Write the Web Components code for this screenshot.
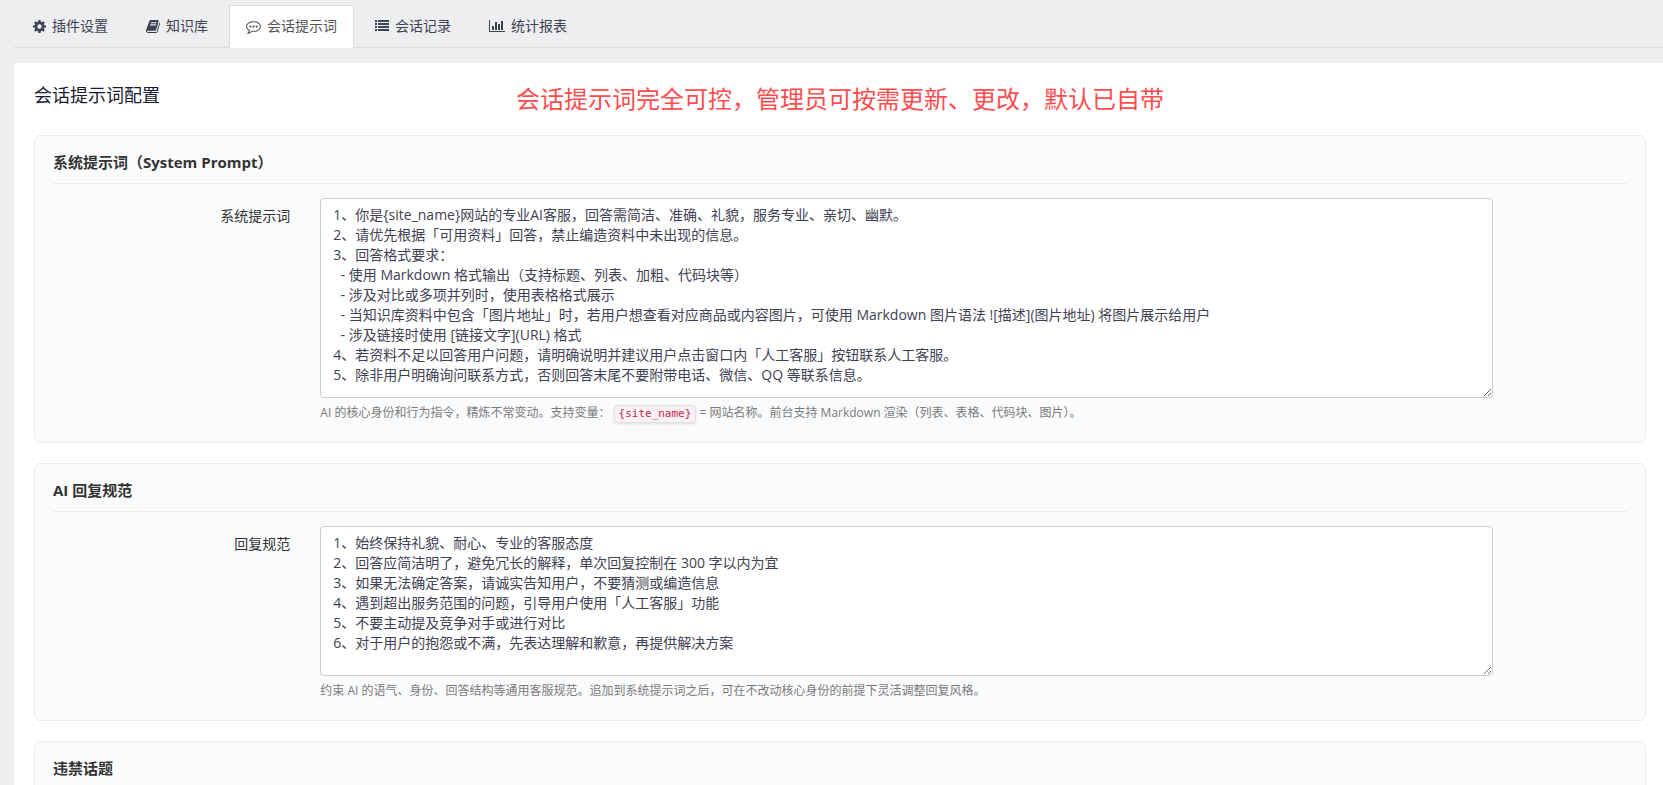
<!DOCTYPE html>
<html lang="zh-CN">
<head>
<meta charset="utf-8">
<meta name="viewport" content="width=device-width, initial-scale=1">
<title>会话提示词配置</title>
<style>
body {
	margin: 0;
	padding: 5px 0 0 14px;
	min-height: 100vh;
	box-sizing: border-box;
	overflow: hidden;
	background: #edeef0;
	color: #333;
	font: 14px/20px "Open Sans", "Noto Sans CJK SC", sans-serif;
}
</style>
</head>
<body>

<ps-tabs>
	<ps-tab icon="cog">插件设置</ps-tab>
	<ps-tab icon="book">知识库</ps-tab>
	<ps-tab icon="comment" active>会话提示词</ps-tab>
	<ps-tab icon="list">会话记录</ps-tab>
	<ps-tab icon="chart">统计报表</ps-tab>
</ps-tabs>

<ps-panel>
	<span slot="title">会话提示词配置</span>
	<span slot="note">会话提示词完全可控，管理员可按需更新、更改，默认已自带</span>

	<ps-card>
		<span slot="title">系统提示词（System Prompt）</span>
		<ps-field label="系统提示词" size="large" value="1、你是{site_name}网站的专业AI客服，回答需简洁、准确、礼貌，服务专业、亲切、幽默。
2、请优先根据「可用资料」回答，禁止编造资料中未出现的信息。
3、回答格式要求：
  - 使用 Markdown 格式输出（支持标题、列表、加粗、代码块等）
  - 涉及对比或多项并列时，使用表格格式展示
  - 当知识库资料中包含「图片地址」时，若用户想查看对应商品或内容图片，可使用 Markdown 图片语法 ![描述](图片地址) 将图片展示给用户
  - 涉及链接时使用 [链接文字](URL) 格式
4、若资料不足以回答用户问题，请明确说明并建议用户点击窗口内「人工客服」按钮联系人工客服。
5、除非用户明确询问联系方式，否则回答末尾不要附带电话、微信、QQ 等联系信息。">AI 的核心身份和行为指令，精炼不常变动。支持变量：<ps-code>{site_name}</ps-code> = 网站名称。前台支持 Markdown 渲染（列表、表格、代码块、图片）。</ps-field>
	</ps-card>

	<ps-card>
		<span slot="title">AI 回复规范</span>
		<ps-field label="回复规范" value="1、始终保持礼貌、耐心、专业的客服态度
2、回答应简洁明了，避免冗长的解释，单次回复控制在 300 字以内为宜
3、如果无法确定答案，请诚实告知用户，不要猜测或编造信息
4、遇到超出服务范围的问题，引导用户使用「人工客服」功能
5、不要主动提及竞争对手或进行对比
6、对于用户的抱怨或不满，先表达理解和歉意，再提供解决方案">约束 AI 的语气、身份、回答结构等通用客服规范。追加到系统提示词之后，可在不改动核心身份的前提下灵活调整回复风格。</ps-field>
	</ps-card>

	<ps-card>
		<span slot="title">违禁话题</span>
	</ps-card>
</ps-panel>

<script>
'use strict';

const ICONS = {
	cog: '<svg viewBox="0 0 14 14" width="13" height="13"><path fill-rule="evenodd" d="M5.9 0h2.2l.35 1.9 1.1.45L11.2 1.3l1.5 1.5-1.05 1.65.45 1.1 1.9.35v2.2l-1.9.35-.45 1.1 1.05 1.65-1.5 1.5-1.65-1.05-1.1.45L8.1 14H5.9l-.35-1.9-1.1-.45L2.8 12.7l-1.5-1.5 1.05-1.65-.45-1.1L0 8.1V5.9l1.9-.35.45-1.1L1.3 2.8l1.5-1.5 1.65 1.05 1.1-.45zM7 4.6a2.4 2.4 0 1 0 0 4.8a2.4 2.4 0 1 0 0-4.8z"/></svg>',
	book: '<svg viewBox="0 128 1664 1536" width="14" height="13"><path d="M1639 478q40 57 18 129l-275 906q-19 64-76.5 107.5t-122.5 43.5h-923q-77 0-148.5-53.5t-99.5-131.5q-24-67-2-127 0-4 3-27t4-37q1-8-3-21.5t-3-19.5q2-11 8-21t16.5-23.5 16.5-23.5q23-38 45-91.5t30-91.5q3-10 .5-30t-.5-28q3-11 17-28t17-23q21-36 42-92t25-90q1-9-2.5-32t.5-28q4-13 22-30.5t22-22.5q19-26 42.5-84.5t27.5-96.5q1-8-3-25.5t-2-26.5q2-8 9-18t18-23 17-21q8-12 16.5-30.5t15-35 16-36 19.5-32 26.5-23.5 36-11.5 47.5 5.5l-1 3q38-9 51-9h761q74 0 114 56t18 130l-274 906q-36 119-71.5 153.5t-128.5 34.5h-869q-27 0-38 15-11 16-1 43 24 70 144 70h923q29 0 56-15.5t35-41.5l300-987q7-22 5-57 38 15 59 43zm-1064 2q-4 13 2 22.5t20 9.5h608q13 0 25.5-9.5t16.5-22.5l21-64q4-13-2-22.5t-20-9.5h-608q-13 0-25.5 9.5t-16.5 22.5zm-83 256q-4 13 2 22.5t20 9.5h608q13 0 25.5-9.5t16.5-22.5l21-64q4-13-2-22.5t-20-9.5h-608q-13 0-25.5 9.5t-16.5 22.5z"/></svg>',
	comment: '<svg viewBox="0 0 1792 1792" width="15" height="15"><path d="M640 896q0 53-37.5 90.5t-90.5 37.5-90.5-37.5-37.5-90.5 37.5-90.5 90.5-37.5 90.5 37.5 37.5 90.5zm384 0q0 53-37.5 90.5t-90.5 37.5-90.5-37.5-37.5-90.5 37.5-90.5 90.5-37.5 90.5 37.5 37.5 90.5zm384 0q0 53-37.5 90.5t-90.5 37.5-90.5-37.5-37.5-90.5 37.5-90.5 90.5-37.5 90.5 37.5 37.5 90.5zm-512-512q-204 0-381.5 69.5t-282 187.5-104.5 255q0 112 71.5 213.5t201.5 175.5l87 50-27 96q-24 91-70 172 152-63 275-171l43-38 57 6q69 8 130 8 204 0 381.5-69.5t282-187.5 104.5-255-104.5-255-282-187.5-381.5-69.5zm896 512q0 174-120 321.5t-326 233-450 85.5q-70 0-145-8-198 175-460 242-49 14-114 22h-5q-15 0-27-10.5t-16-27.5v-1q-3-4-.5-12t2-10 4.5-9.5l6-9 7-8.5 8-9q7-8 31-34.5t34.5-38 31-39.5 32.5-51 27-59 26-76q-157-89-247.5-220t-90.5-281q0-130 71-248.5t191-204.5 286-136.5 348-50.5 348 50.5 286 136.5 191 204.5 71 248.5z"/></svg>',
	list: '<svg viewBox="0 0 14 12" width="14" height="12"><path d="M0 0h2v2H0zM3 0h11v2H3zM0 3h2v2H0zM3 3h11v2H3zM0 6h2v2H0zM3 6h11v2H3zM0 9h2v2H0zM3 9h11v2H3z"/></svg>',
	chart: '<svg viewBox="0 0 16 12" width="16" height="12"><path d="M0 0h1v11h15v1H0zM3 6h2v4H3zM6 2h2v8H6zM9 4h2v6H9zM12 1h2v9h-2z"/></svg>'
};


class psTabs extends HTMLElement{
	constructor(){
		super();
		let shadow = this.attachShadow({mode:'open'});
		shadow.innerHTML = `
<style>
:host {
	display: block;
	border-bottom: 1px solid #ddd;
}
nav {
	display: flex;
	gap: 4px;
	padding-left: 2px;
}
</style>
<nav><slot></slot></nav>
		`;
	}
}


class psTab extends HTMLElement{
	constructor(){
		super();
		let shadow = this.attachShadow({mode:'open'});
		shadow.innerHTML = `
<style>
:host {
	display: block;
	margin-bottom: -1px;
}
a {
	display: flex;
	align-items: center;
	gap: 6px;
	height: 40px;
	padding: 0 16px 2px;
	border: 1px solid transparent;
	border-bottom: 0;
	color: #3f4254;
	text-decoration: none;
}
:host([active]) a {
	border-color: #ddd;
	background: #fff;
	color: #555;
}
svg {
	fill: currentColor;
}
</style>
<a href="#">${ICONS[this.getAttribute('icon')]}<slot></slot></a>
		`;
		if(this.hasAttribute('active')){
			shadow.querySelector('a').setAttribute('aria-current','page');
		}
	}
}


class psPanel extends HTMLElement{
	constructor(){
		super();
		let shadow = this.attachShadow({mode:'open'});
		shadow.innerHTML = `
<style>
:host {
	display: block;
	margin-top: 15px;
	padding: 20px 17px 20px 20px;
	border-radius: 4px 0 0 0;
	background: #fff;
}
header {
	display: grid;
	grid-template-columns: 1fr auto 1fr;
	margin-bottom: 20px;
}
h2 {
	margin: 0;
	color: #181c32;
	font-size: 18px;
	font-weight: 400;
	line-height: 24px;
}
p {
	margin: 0;
	color: #ff4d4f;
	font-size: 24px;
	line-height: 32px;
}
section {
	display: grid;
	gap: 20px;
}
</style>
<header>
	<h2><slot name="title"></slot></h2>
	<p><slot name="note"></slot></p>
</header>
<section><slot></slot></section>
		`;
	}
}


class psCard extends HTMLElement{
	constructor(){
		super();
		let shadow = this.attachShadow({mode:'open'});
		shadow.innerHTML = `
<style>
:host {
	display: block;
	padding: 18px 18px 19px;
	border: 1px solid #e8ecf0;
	border-radius: 6px;
	background: #fafbfd;
}
h3 {
	margin: 0 0 14px;
	padding-bottom: 12px;
	border-bottom: 1px solid #e8ecf0;
	font-size: 15px;
	font-weight: 700;
	line-height: 17px;
}
</style>
<h3><slot name="title"></slot></h3>
<slot></slot>
		`;
	}
}


class psField extends HTMLElement{
	constructor(){
		super();
		let shadow = this.attachShadow({mode:'open'});
		// the row hangs 15px out of the card, like the gutters of a 12 column grid
		shadow.innerHTML = `
<style>
:host {
	display: grid;
	grid-template-columns: 2fr 9fr 1fr;
	margin: 0 -15px;
}
label {
	padding: 8px 15px 0;
	text-align: right;
}
div {
	padding: 0 15px;
}
textarea {
	display: block;
	box-sizing: border-box;
	width: 100%;
	height: 150px;
	padding: 6px 12px;
	border: 1px solid #ccc;
	border-radius: 4px;
	background: #fff;
	color: #3f4254;
	font: inherit;
	resize: vertical;
}
:host([size="large"]) textarea {
	height: 200px;
}
p {
	margin: 5px 0 0;
	color: #7a7a7a;
	font-size: 12px;
	line-height: 20px;
}
</style>
<label for="text"></label>
<div>
	<textarea id="text" aria-describedby="help" spellcheck="false"></textarea>
	<p id="help"><slot></slot></p>
</div>
		`;
		shadow.querySelector('label').textContent = this.getAttribute('label');
		shadow.querySelector('textarea').value = this.getAttribute('value');
	}
}


class psCode extends HTMLElement{
	constructor(){
		super();
		let shadow = this.attachShadow({mode:'open'});
		shadow.innerHTML = `
<style>
code {
	display: inline-block;
	padding: 0 4px;
	border: 1px solid #e6e1e4;
	border-radius: 4px;
	background: #f9f2f4;
	box-shadow: 0 1px 3px rgba(0,0,0,0.12);
	color: #c7254e;
	font: 11px/16px "DejaVu Sans Mono", monospace;
}
</style>
<code><slot></slot></code>
		`;
	}
}


window.customElements.define('ps-tabs',psTabs);
window.customElements.define('ps-tab',psTab);
window.customElements.define('ps-panel',psPanel);
window.customElements.define('ps-card',psCard);
window.customElements.define('ps-field',psField);
window.customElements.define('ps-code',psCode);
</script>
</body>
</html>
